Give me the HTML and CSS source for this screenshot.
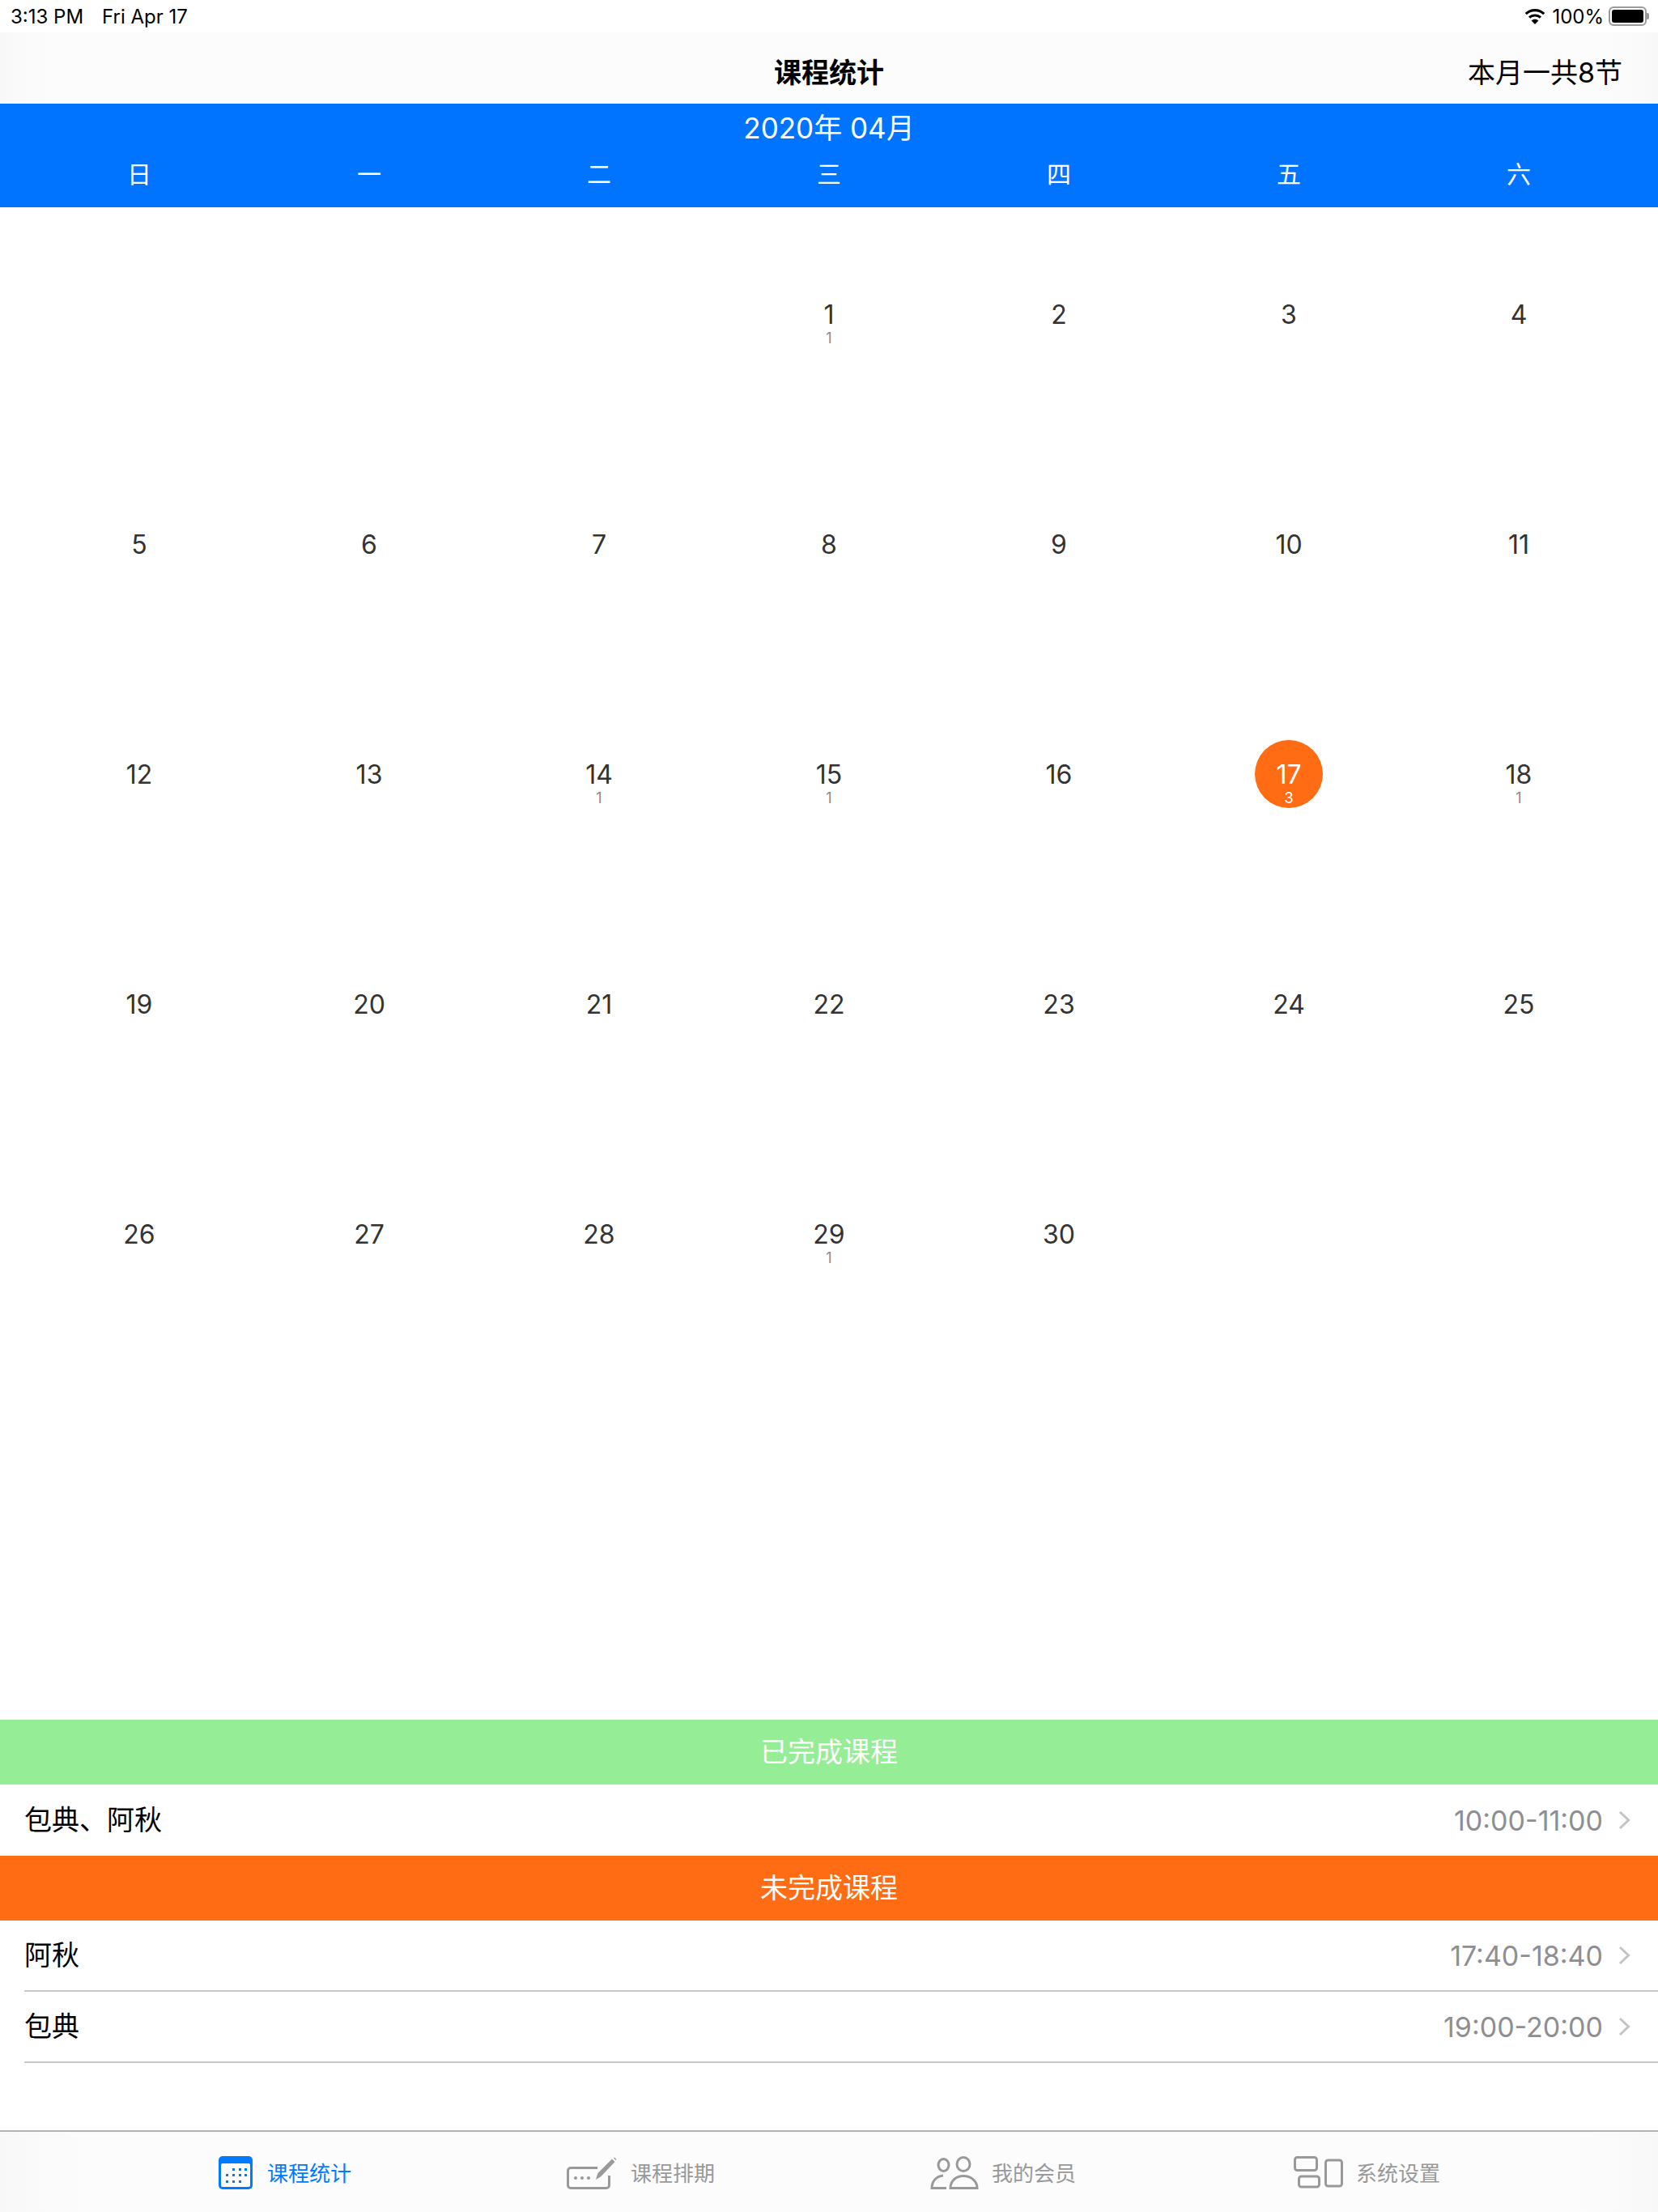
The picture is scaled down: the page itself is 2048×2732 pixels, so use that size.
FILE: index.html
```html
<!DOCTYPE html>
<html lang="zh-CN">
<head>
  <meta charset="UTF-8" />
  <title>课程统计</title>
  <link rel="stylesheet" href="styles.css">
</head>
<body>
  <div class="status-bar">
    <div class="status-left"><span>3:13 PM</span><span>Fri Apr 17</span></div>
    <div class="status-right">
      <svg class="wifi" viewBox="0 0 30 21"><path d="M15 4.2c3.9 0 7.5 1.500 10.200 4l2.100-2.200C24 2.900 19.700 1 15 1S6 2.900 2.700 6l2.100 2.200c2.700-2.500 6.300-4 10.200-4z"/><path d="M15 10.600c2.200 0 4.200.8 5.800 2.200l2.200-2.300C20.900 8.600 18.100 7.400 15 7.400s-5.900 1.200-8 3.100l2.200 2.300c1.600-1.400 3.600-2.200 5.800-2.200z"/><path d="M15 13.800c-1.700 0-3.200.6-4.400 1.700L15 20l4.400-4.500c-1.200-1.100-2.700-1.700-4.400-1.700z"/></svg>
      <span>100%</span>
      <div class="battery"><div class="battery-fill"></div></div>
      <div class="battery-nub"></div>
    </div>
  </div>

  <header class="nav-bar">
    <h1>课程统计</h1>
    <div class="nav-total">本月一共8节</div>
  </header>

  <div class="cal-head">
    <div class="cal-month">2020年 04月</div>
    <div class="cal-weekdays">
      <span>日</span><span>一</span><span>二</span><span>三</span><span>四</span><span>五</span><span>六</span>
    </div>
  </div>

  <!-- 2020年4月 -->
  <div class="cal-grid">
    <div class="day"></div>
    <div class="day"></div>
    <div class="day"></div>
    <div class="day"><div class="day-mark"><span class="num">1</span><span class="count">1</span></div></div>
    <div class="day"><div class="day-mark"><span class="num">2</span></div></div>
    <div class="day"><div class="day-mark"><span class="num">3</span></div></div>
    <div class="day"><div class="day-mark"><span class="num">4</span></div></div>
    <div class="day"><div class="day-mark"><span class="num">5</span></div></div>
    <div class="day"><div class="day-mark"><span class="num">6</span></div></div>
    <div class="day"><div class="day-mark"><span class="num">7</span></div></div>
    <div class="day"><div class="day-mark"><span class="num">8</span></div></div>
    <div class="day"><div class="day-mark"><span class="num">9</span></div></div>
    <div class="day"><div class="day-mark"><span class="num">10</span></div></div>
    <div class="day"><div class="day-mark"><span class="num">11</span></div></div>
    <div class="day"><div class="day-mark"><span class="num">12</span></div></div>
    <div class="day"><div class="day-mark"><span class="num">13</span></div></div>
    <div class="day"><div class="day-mark"><span class="num">14</span><span class="count">1</span></div></div>
    <div class="day"><div class="day-mark"><span class="num">15</span><span class="count">1</span></div></div>
    <div class="day"><div class="day-mark"><span class="num">16</span></div></div>
    <div class="day"><div class="day-mark today"><span class="num">17</span><span class="count">3</span></div></div>
    <div class="day"><div class="day-mark"><span class="num">18</span><span class="count">1</span></div></div>
    <div class="day"><div class="day-mark"><span class="num">19</span></div></div>
    <div class="day"><div class="day-mark"><span class="num">20</span></div></div>
    <div class="day"><div class="day-mark"><span class="num">21</span></div></div>
    <div class="day"><div class="day-mark"><span class="num">22</span></div></div>
    <div class="day"><div class="day-mark"><span class="num">23</span></div></div>
    <div class="day"><div class="day-mark"><span class="num">24</span></div></div>
    <div class="day"><div class="day-mark"><span class="num">25</span></div></div>
    <div class="day"><div class="day-mark"><span class="num">26</span></div></div>
    <div class="day"><div class="day-mark"><span class="num">27</span></div></div>
    <div class="day"><div class="day-mark"><span class="num">28</span></div></div>
    <div class="day"><div class="day-mark"><span class="num">29</span><span class="count">1</span></div></div>
    <div class="day"><div class="day-mark"><span class="num">30</span></div></div>
  </div>

  <section class="lessons">
    <div class="lessons-title done">已完成课程</div>
    <div class="lesson">
      <span class="lesson-name">包典、阿秋</span>
      <span class="lesson-time">10:00-11:00</span>
      <svg class="chevron" viewBox="0 0 15 24"><path d="M2 2l10.500 10L2 22"/></svg>
    </div>
    <div class="lessons-title todo">未完成课程</div>
    <div class="lesson lined">
      <span class="lesson-name">阿秋</span>
      <span class="lesson-time">17:40-18:40</span>
      <svg class="chevron" viewBox="0 0 15 24"><path d="M2 2l10.500 10L2 22"/></svg>
    </div>
    <div class="lesson lined">
      <span class="lesson-name">包典</span>
      <span class="lesson-time">19:00-20:00</span>
      <svg class="chevron" viewBox="0 0 15 24"><path d="M2 2l10.500 10L2 22"/></svg>
    </div>
  </section>

  <nav class="tab-bar">
    <div class="tab active">
      <svg class="tab-icon icon-cal" viewBox="0 0 42 41">
        <rect width="42" height="41" rx="5" fill="#007aff"/>
        <rect x="3" y="9" width="36" height="29" rx="2" fill="#fff"/>
        <g fill="#007aff">
          <rect x="17" y="15" width="3" height="3"/><rect x="25" y="15" width="3" height="3"/><rect x="32" y="15" width="3" height="3"/>
          <rect x="9" y="22" width="3" height="3"/><rect x="17" y="22" width="3" height="3"/><rect x="25" y="22" width="3" height="3"/><rect x="32" y="22" width="3" height="3"/>
          <rect x="9" y="30" width="3" height="3"/><rect x="17" y="30" width="3" height="3"/><rect x="25" y="30" width="3" height="3"/>
        </g>
      </svg>
      <span>课程统计</span>
    </div>
    <div class="tab">
      <svg class="tab-icon icon-pen" viewBox="0 0 63 41">
        <path d="M38 14.500H5a3.500 3.500 0 0 0-3.500 3.500v18a3.500 3.500 0 0 0 3.500 3.500h44a3.500 3.500 0 0 0 3.500-3.500V24" fill="none" stroke="#999" stroke-width="3"/>
        <g fill="#999"><circle cx="11" cy="27" r="2"/><circle cx="19" cy="27" r="2"/><circle cx="27" cy="27" r="2"/></g>
        <path d="M36 29l2.500-8L56 3.500l3.500 3.500L42.500 25z" fill="#999"/>
        <path d="M58 2.500l1-1 2.500 2.500-1 1z" fill="#999"/>
      </svg>
      <span>课程排期</span>
    </div>
    <div class="tab">
      <svg class="tab-icon icon-people" viewBox="0 0 60 41">
        <g fill="none" stroke="#999" stroke-width="3">
          <ellipse cx="16.500" cy="11" rx="6.500" ry="7.500"/>
          <ellipse cx="41" cy="10" rx="8" ry="8.500"/>
          <path d="M20 39.500H2c0-8 5-14.500 14-15.500"/>
          <path d="M25 39.500c0-9 7-15 16-15s17 6 17 15z"/>
        </g>
      </svg>
      <span>我的会员</span>
    </div>
    <div class="tab">
      <svg class="tab-icon icon-set" viewBox="0 0 61 40">
        <g fill="none" stroke="#999" stroke-width="3">
          <rect x="1.500" y="1.500" width="27" height="16" rx="3"/>
          <rect x="6.500" y="25" width="25" height="13" rx="3"/>
          <rect x="39.500" y="5" width="20" height="32" rx="3"/>
        </g>
      </svg>
      <span>系统设置</span>
    </div>
  </nav>
</body>
</html>
```

FILE: styles.css
```css
* { box-sizing: border-box; }
html, body { margin: 0; padding: 0; }
body { width: 2048px; height: 2732px; overflow: hidden; display: flex; flex-direction: column; background-color: #fff; color: #000; font-family: Inter, "Noto Sans CJK SC", sans-serif; }

.status-bar { height: 40px; display: flex; justify-content: space-between; align-items: center; padding: 0 11px 0 13px; font-size: 24px; }
.status-left { display: flex; gap: 23px; }
.status-right { display: flex; align-items: center; }
.wifi { width: 30px; height: 21px; margin-right: 6px; fill: #000; }
.battery { width: 47px; height: 24px; border: 2px solid #9a9a9a; border-radius: 6px; padding: 2px; margin-left: 6px; }
.battery-fill { width: 100%; height: 100%; background-color: #000; border-radius: 3px; }
.battery-nub { width: 3px; height: 8px; background-color: #9a9a9a; border-radius: 0 2px 2px 0; }

.nav-bar { height: 88px; display: flex; align-items: center; justify-content: center; position: relative; padding-top: 6px; background: linear-gradient(to right, #f8f8f8, #fcfcfc 55px, #fcfcfc 1990px, #f8f8f8); }
.nav-bar h1 { margin: 0; font-size: 34px; font-weight: 700; }
.nav-total { position: absolute; right: 44px; top: 28px; font-size: 34px; line-height: 44px; }

.cal-head { height: 128px; background-color: #0074ff; color: #fff; }
.cal-month { height: 60px; line-height: 60px; text-align: center; font-size: 35px; }
.cal-weekdays { display: grid; grid-template-columns: repeat(7, 284px); padding: 0 30px; text-align: center; font-size: 30px; line-height: 55px; }

.cal-grid { display: grid; grid-template-columns: repeat(7, 284px); grid-auto-rows: 284px; height: 1868px; padding: 0 30px; align-content: start; }
.day { display: flex; justify-content: center; }
.day-mark { width: 84px; height: 84px; margin-top: 90px; border-radius: 50%; display: flex; flex-direction: column; align-items: center; padding-top: 27px; color: #333; }
.num { font-size: 32px; line-height: 32px; }
.count { font-size: 18px; line-height: 20px; margin-top: 3px; color: #8a8a8a; }
.today { background-color: #ff6c14; color: #fff; }
.today .count { color: #fff; }

.lessons-title { height: 80px; line-height: 80px; text-align: center; color: #fff; font-size: 34px; }
.done { background-color: #95ed95; }
.todo { background-color: #ff6c14; }
.lesson { height: 88px; margin-left: 30px; padding-right: 34px; display: flex; align-items: center; }
.lined { border-bottom: 2px solid #c8c8cc; }
.lesson-name { flex: 1; font-size: 34px; line-height: 46px; }
.lesson-time { font-size: 34px; color: #8e8e93; margin-right: 19px; }
.chevron { width: 15px; height: 24px; fill: none; stroke: #c4c4c7; stroke-width: 3; }

.tab-bar { margin-top: auto; height: 101px; border-top: 2px solid #b4b4b4; background: linear-gradient(to right, #f8f8f8, #fcfcfc 100px, #fcfcfc 1950px, #f8f8f8); display: flex; gap: 266px; padding: 30px 0 0 270px; }
.tab { display: flex; align-items: flex-start; color: #999; font-size: 26px; line-height: 44px; }
.tab.active { color: #007aff; }
.tab-icon { height: 41px; margin-right: 16px; flex-shrink: 0; }
.icon-cal { width: 42px; margin-right: 18px; }
.icon-pen { width: 63px; }
.icon-people { width: 60px; }
.icon-set { width: 61px; height: 40px; margin-left: 3px; }
```
